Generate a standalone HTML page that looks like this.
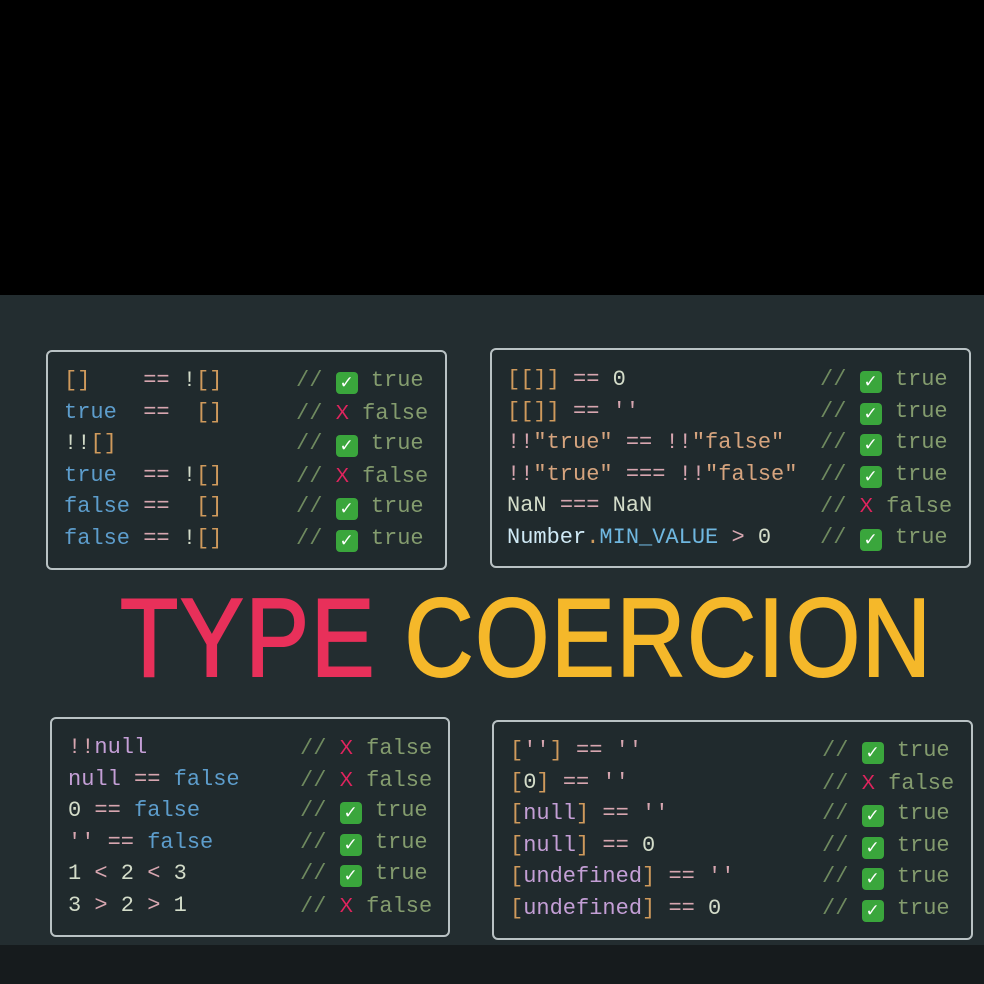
<!DOCTYPE html><html><head><meta charset="utf-8"><style>
body{margin:0;width:984px;height:984px;background:#000;position:relative;overflow:hidden;font-family:"Liberation Mono",monospace}
.bg{position:absolute;left:0;top:295px;width:984px;height:650px;background:#232d30}
.bt{position:absolute;left:0;top:945px;width:984px;height:39px;background:#161b1d}
.box{position:absolute;border:2px solid #b9c2c4;border-radius:6px;background:#202a2d}
.l{position:absolute;font-size:22px;line-height:30px;white-space:pre;color:#d3dcc9}
.o{color:#cf9a5c}.p{color:#d7a6b0}.b{color:#5d9dcc}.v{color:#c49fd6}.w{color:#d3dcc9}.s{color:#d6a47e}.c{color:#6f8a5f}.t{color:#849c6e}.x{color:#e0245e;font-family:"Liberation Sans",sans-serif;font-size:20px}.n{color:#cfe9f5}.m{color:#6fb7e0}
.k{display:inline-block;width:22px;height:22px;background:#3aa63c;border-radius:4px;color:#fff;font-family:"DejaVu Sans",sans-serif;font-size:17px;line-height:22px;text-align:center;vertical-align:-2px;font-weight:bold}
.title{position:absolute;left:120px;top:577px;font-family:"Liberation Sans",sans-serif;font-size:111px;line-height:122px;transform:scaleX(.86);transform-origin:left top;white-space:pre;letter-spacing:2px;-webkit-text-stroke:2px}
</style></head><body>
<div class="bg"></div><div class="bt"></div>
<div class="box" style="left:46px;top:350px;width:397px;height:216px"></div>
<div class="box" style="left:490px;top:348px;width:477px;height:216px"></div>
<div class="box" style="left:50px;top:717px;width:396px;height:216px"></div>
<div class="box" style="left:492px;top:720px;width:477px;height:216px"></div>

<div class="l" style="left:64px;top:366px"><span class="o">[]</span>    <span class="p">==</span> !<span class="o">[]</span></div>
<div class="l" style="left:64px;top:398px"><span class="b">true</span>  <span class="p">==</span>  <span class="o">[]</span></div>
<div class="l" style="left:64px;top:429px">!!<span class="o">[]</span></div>
<div class="l" style="left:64px;top:461px"><span class="b">true</span>  <span class="p">==</span> !<span class="o">[]</span></div>
<div class="l" style="left:64px;top:492px"><span class="b">false</span> <span class="p">==</span>  <span class="o">[]</span></div>
<div class="l" style="left:64px;top:524px"><span class="b">false</span> <span class="p">==</span> !<span class="o">[]</span></div>
<div class="l" style="left:296px;top:366px"><span class="c">//</span> <span class="k">✓</span> <span class="t">true</span></div>
<div class="l" style="left:296px;top:398px"><span class="c">//</span> <span class="x">X</span> <span class="t">false</span></div>
<div class="l" style="left:296px;top:429px"><span class="c">//</span> <span class="k">✓</span> <span class="t">true</span></div>
<div class="l" style="left:296px;top:461px"><span class="c">//</span> <span class="x">X</span> <span class="t">false</span></div>
<div class="l" style="left:296px;top:492px"><span class="c">//</span> <span class="k">✓</span> <span class="t">true</span></div>
<div class="l" style="left:296px;top:524px"><span class="c">//</span> <span class="k">✓</span> <span class="t">true</span></div>

<div class="l" style="left:507px;top:365px"><span class="o">[[]]</span> <span class="p">==</span> 0</div>
<div class="l" style="left:507px;top:397px"><span class="o">[[]]</span> <span class="p">==</span> <span class="p">''</span></div>
<div class="l" style="left:507px;top:428px"><span class="p">!!</span><span class="s">"true"</span> <span class="p">==</span> <span class="p">!!</span><span class="s">"false"</span></div>
<div class="l" style="left:507px;top:460px"><span class="p">!!</span><span class="s">"true"</span> <span class="p">===</span> <span class="p">!!</span><span class="s">"false"</span></div>
<div class="l" style="left:507px;top:491px">NaN <span class="p">===</span> NaN</div>
<div class="l" style="left:507px;top:523px"><span class="n">Number</span><span class="o">.</span><span class="m">MIN_VALUE</span> <span class="p">&gt;</span> 0</div>
<div class="l" style="left:820px;top:365px"><span class="c">//</span> <span class="k">✓</span> <span class="t">true</span></div>
<div class="l" style="left:820px;top:397px"><span class="c">//</span> <span class="k">✓</span> <span class="t">true</span></div>
<div class="l" style="left:820px;top:428px"><span class="c">//</span> <span class="k">✓</span> <span class="t">true</span></div>
<div class="l" style="left:820px;top:460px"><span class="c">//</span> <span class="k">✓</span> <span class="t">true</span></div>
<div class="l" style="left:820px;top:491px"><span class="c">//</span> <span class="x">X</span> <span class="t">false</span></div>
<div class="l" style="left:820px;top:523px"><span class="c">//</span> <span class="k">✓</span> <span class="t">true</span></div>

<div class="title"><span style="color:#e8305a">TYPE</span> <span style="color:#f5b82a">COERCION</span></div>

<div class="l" style="left:68px;top:733px"><span class="p">!!</span><span class="v">null</span></div>
<div class="l" style="left:68px;top:765px"><span class="v">null</span> <span class="p">==</span> <span class="b">false</span></div>
<div class="l" style="left:68px;top:796px">0 <span class="p">==</span> <span class="b">false</span></div>
<div class="l" style="left:68px;top:828px"><span class="p">''</span> <span class="p">==</span> <span class="b">false</span></div>
<div class="l" style="left:68px;top:859px">1 <span class="p">&lt;</span> 2 <span class="p">&lt;</span> 3</div>
<div class="l" style="left:68px;top:891px">3 <span class="p">&gt;</span> 2 <span class="p">&gt;</span> 1</div>
<div class="l" style="left:300px;top:733px"><span class="c">//</span> <span class="x">X</span> <span class="t">false</span></div>
<div class="l" style="left:300px;top:765px"><span class="c">//</span> <span class="x">X</span> <span class="t">false</span></div>
<div class="l" style="left:300px;top:796px"><span class="c">//</span> <span class="k">✓</span> <span class="t">true</span></div>
<div class="l" style="left:300px;top:828px"><span class="c">//</span> <span class="k">✓</span> <span class="t">true</span></div>
<div class="l" style="left:300px;top:859px"><span class="c">//</span> <span class="k">✓</span> <span class="t">true</span></div>
<div class="l" style="left:300px;top:891px"><span class="c">//</span> <span class="x">X</span> <span class="t">false</span></div>

<div class="l" style="left:510px;top:736px"><span class="o">[</span><span class="p">''</span><span class="o">]</span> <span class="p">==</span> <span class="p">''</span></div>
<div class="l" style="left:510px;top:768px"><span class="o">[</span>0<span class="o">]</span> <span class="p">==</span> <span class="p">''</span></div>
<div class="l" style="left:510px;top:799px"><span class="o">[</span><span class="v">null</span><span class="o">]</span> <span class="p">==</span> <span class="p">''</span></div>
<div class="l" style="left:510px;top:831px"><span class="o">[</span><span class="v">null</span><span class="o">]</span> <span class="p">==</span> 0</div>
<div class="l" style="left:510px;top:862px"><span class="o">[</span><span class="v">undefined</span><span class="o">]</span> <span class="p">==</span> <span class="p">''</span></div>
<div class="l" style="left:510px;top:894px"><span class="o">[</span><span class="v">undefined</span><span class="o">]</span> <span class="p">==</span> 0</div>
<div class="l" style="left:822px;top:736px"><span class="c">//</span> <span class="k">✓</span> <span class="t">true</span></div>
<div class="l" style="left:822px;top:768px"><span class="c">//</span> <span class="x">X</span> <span class="t">false</span></div>
<div class="l" style="left:822px;top:799px"><span class="c">//</span> <span class="k">✓</span> <span class="t">true</span></div>
<div class="l" style="left:822px;top:831px"><span class="c">//</span> <span class="k">✓</span> <span class="t">true</span></div>
<div class="l" style="left:822px;top:862px"><span class="c">//</span> <span class="k">✓</span> <span class="t">true</span></div>
<div class="l" style="left:822px;top:894px"><span class="c">//</span> <span class="k">✓</span> <span class="t">true</span></div>
</body></html>
